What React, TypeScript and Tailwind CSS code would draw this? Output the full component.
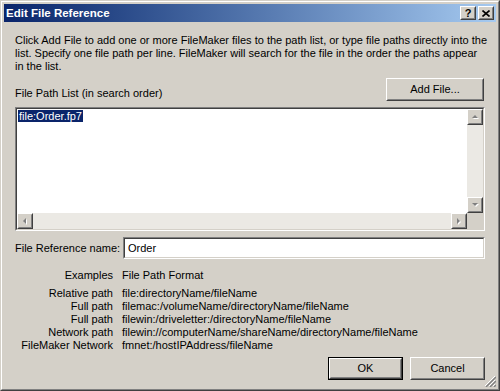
import React from 'react';

// Win2k style dialog: "Edit File Reference"

const FONT = { fontFamily: '"Liberation Sans", Arial, sans-serif' };

const Raised: React.FC<{ className?: string; inner?: string; children?: React.ReactNode }> = ({ className = '', inner = '', children }) => (
  <div className={`border border-t-white border-l-white border-b-[#404040] border-r-[#404040] bg-[#d4d0c8] ${className}`}>
    <div className={`h-full w-full border border-t-[#d4d0c8] border-l-[#d4d0c8] border-b-[#808080] border-r-[#808080] flex items-center justify-center ${inner}`}>
      {children}
    </div>
  </div>
);

const Sunken: React.FC<{ className?: string; inner?: string; children?: React.ReactNode }> = ({ className = '', inner = '', children }) => (
  <div className={`border border-t-[#808080] border-l-[#808080] border-b-white border-r-white ${className}`}>
    <div className={`h-full w-full border border-t-[#404040] border-l-[#404040] border-b-[#d4d0c8] border-r-[#d4d0c8] bg-white ${inner}`}>
      {children}
    </div>
  </div>
);

type Dir = 'up' | 'down' | 'left' | 'right';

const Arrow: React.FC<{ dir: Dir }> = ({ dir }) => {
  const pts: Record<Dir, string> = {
    up: '1,5 4,2 7,5',
    down: '1,2 4,5 7,2',
    left: '5,1 2,4 5,7',
    right: '2,1 5,4 2,7',
  };
  return (
    <svg width="8" height="8" viewBox="0 0 8 8">
      <polygon points={pts[dir]} fill="#ffffff" transform="translate(1,1)" />
      <polygon points={pts[dir]} fill="#808080" />
    </svg>
  );
};

const ScrollBtn: React.FC<{ dir: Dir }> = ({ dir }) => (
  <Raised className="w-4 h-4 shrink-0">
    <Arrow dir={dir} />
  </Raised>
);

const EXAMPLES = [
  ['Relative path', 'file:directoryName/fileName'],
  ['Full path', 'filemac:/volumeName/directoryName/fileName'],
  ['Full path', 'filewin:/driveletter:/directoryName/fileName'],
  ['Network path', 'filewin://computerName/shareName/directoryName/fileName'],
  ['FileMaker Network', 'fmnet:/hostIPAddress/fileName'],
];

const App: React.FC = () => {
  return (
    <div style={FONT} className="w-[500px] h-[391px] text-[11px] leading-[13px] text-black">
      <div className="h-full border border-t-[#d4d0c8] border-l-[#d4d0c8] border-b-[#404040] border-r-[#404040] bg-[#d4d0c8]">
        <div className="h-full border border-t-white border-l-white border-b-[#808080] border-r-[#808080] p-[2px] flex flex-col">
          {/* Title bar */}
          <div className="h-[18px] shrink-0 flex items-center justify-between pl-[2px] pr-[2px] bg-gradient-to-r from-[#0a246a] to-[#a6caf0]">
            <span className="text-white font-bold text-[11.5px] leading-[14px]">Edit File Reference</span>
            <div className="flex gap-[2px]">
              <Raised className="w-4 h-[14px]">
                <span className="font-bold text-[11px] leading-[10px]">?</span>
              </Raised>
              <Raised className="w-4 h-[14px]">
                <svg width="8" height="7" viewBox="0 0 8 7">
                  <path d="M0.5 0.5 L7.5 6.5 M7.5 0.5 L0.5 6.5" stroke="#000" strokeWidth="1.6" />
                </svg>
              </Raised>
            </div>
          </div>

          {/* Body */}
          <div className="flex-1 flex flex-col px-[11px] pt-[12px] relative">
            <p className="whitespace-nowrap">
              Click Add File to add one or more FileMaker files to the path list, or type file paths directly into the
              <br />
              list. Specify one file path per line. FileMaker will search for the file in the order the paths appear
              <br />
              in the list.
            </p>

            <div className="mt-[5px] flex items-end justify-between pr-[1px]">
              <span className="mb-[1px]">File Path List (in search order)</span>
              <Raised className="w-[98px] h-[23px]">Add File...</Raised>
            </div>

            <Sunken className="mt-[6px] h-[124px] w-[470px]" inner="flex flex-col">
              <div className="flex-1 flex min-h-0">
                <div className="flex-1 pl-[1px] pt-[1px]">
                  <span className="bg-[#0a246a] text-white px-[1px]">file:Order.fp7</span>
                </div>
                <div className="w-4 flex flex-col bg-[#ebe9e4]">
                  <ScrollBtn dir="up" />
                  <div className="flex-1" />
                  <ScrollBtn dir="down" />
                </div>
              </div>
              <div className="h-4 flex">
                <div className="flex-1 flex bg-[#ebe9e4]">
                  <ScrollBtn dir="left" />
                  <div className="flex-1" />
                  <ScrollBtn dir="right" />
                </div>
                <div className="w-4 bg-[#d4d0c8]" />
              </div>
            </Sunken>

            <div className="mt-[6px] flex items-center">
              <span className="w-[108px]">File Reference name:</span>
              <Sunken className="h-[22px] flex-1" inner="flex items-center pl-[3px]">
                Order
              </Sunken>
            </div>

            <div className="mt-[10px] flex flex-col">
              <div className="flex">
                <span className="w-[98px] text-right">Examples</span>
                <span className="ml-[9px]">File Path Format</span>
              </div>
              <div className="mt-[5px] flex flex-col">
                {EXAMPLES.map(([label, path], i) => (
                  <div key={i} className="flex">
                    <span className="w-[98px] text-right whitespace-nowrap">{label}</span>
                    <span className="ml-[9px] whitespace-nowrap">{path}</span>
                  </div>
                ))}
              </div>
            </div>

            <div className="mt-[5px] flex justify-end gap-[7px]">
              <div className="border border-black">
                <Raised className="w-[73px] h-[21px]">OK</Raised>
              </div>
              <Raised className="w-[75px] h-[23px]">Cancel</Raised>
            </div>

            {/* size grip */}
            <svg className="absolute right-0 bottom-0" width="12" height="12" viewBox="0 0 12 12">
              <path d="M11 1 L1 11 M11 5 L5 11 M11 9 L9 11" stroke="#ffffff" strokeWidth="1" />
              <path d="M12 2 L2 12 M12 6 L6 12 M12 10 L10 12" stroke="#808080" strokeWidth="1.4" />
            </svg>
          </div>
        </div>
      </div>
    </div>
  );
};

export default App;
